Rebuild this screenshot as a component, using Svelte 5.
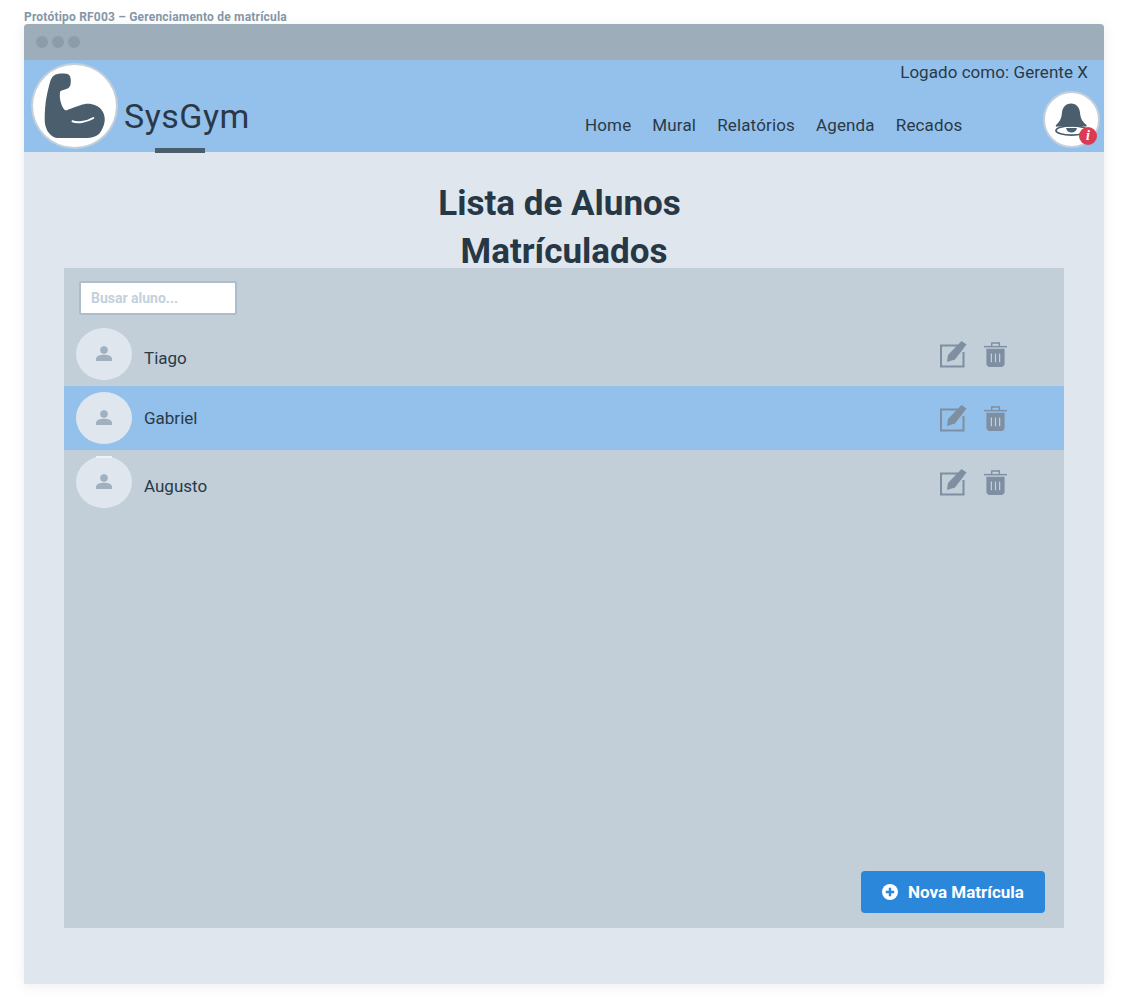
<script>
	const navItems = ['Home', 'Mural', 'Relatórios', 'Agenda', 'Recados'];
	const students = [
		{ name: 'Tiago', offset: 'low' },
		{ name: 'Gabriel', offset: '', selected: true },
		{ name: 'Augusto', offset: 'low', notch: true }
	];
</script>

<div class="page">
	<p class="caption">Protótipo RF003 – Gerenciamento de matrícula</p>

	<div class="window">
		<div class="titlebar">
			<span class="dot"></span>
			<span class="dot"></span>
			<span class="dot"></span>
		</div>

		<header class="header">
			<div class="logo">
				<svg width="83" height="82" viewBox="2 2 83 82" aria-hidden="true">
					<path
						fill="#4b5e6e"
						d="M23 12.500 C26 10 35 10 37.500 11.500 C40 13.500 40 17 39.700 20 C39.500 24 37.500 25.500 34 26.500 C31.500 27.500 29.500 27.500 29 29 C28.500 33 29 37 30 40 C31 44 33 47 35 47.500 C39 46 44 43.500 48 42.700 C53 41 56 40.500 60 41 C65 42 69.500 44.500 71.300 48 C73.500 51.500 74 55 73.700 58 C73 63 71 67.500 68 71 C65 73.500 60 75 56.300 75 L26.300 75 C22 74.500 18.500 71 16.300 67.700 C14.500 64 13.500 60 13.700 56 C13.700 50 14 45 14.700 39.300 C15.500 33 17 27 18.500 21 C19.500 17 20.500 14.500 23 12.500 Z"
					/>
					<path fill="none" stroke="#fff" stroke-width="2" stroke-linecap="round" d="M41.500 58.300 C46 60 55 59.500 62.300 55" />
				</svg>
			</div>

			<div class="brand">
				<span class="brand-name">SysGym</span>
				<span class="brand-mark"></span>
			</div>

			<div class="header-right">
				<p class="user">Logado como: Gerente X</p>
				<div class="header-row">
					<nav class="nav">
						{#each navItems as item}
							<a href="#top">{item}</a>
						{/each}
					</nav>
					<div class="bell">
						<svg width="53" height="53" viewBox="1.500 1.500 53 53" aria-hidden="true">
							<path
								fill="#4b5e6e"
								d="M27.500 12 C33 12 36 16 36.500 21 C37 26 38 29.500 42.500 33 C44 34.500 43 35.500 41 35 L14 35 C12.500 35.500 11.500 34.500 13 33 C17 29.500 18 26 18.500 21 C19 16 22 12 27.500 12 Z"
							/>
							<ellipse cx="28" cy="39" rx="15.500" ry="4.600" fill="none" stroke="#4b5e6e" stroke-width="1.800" />
							<path fill="#4b5e6e" d="M22.500 36.500 H33.500 C33 39.500 30.500 41 28 41 C25.500 41 23 39.500 22.500 36.500 Z" />
						</svg>
						<span class="badge">i</span>
					</div>
				</div>
			</div>
		</header>

		<main class="content">
			<h1 class="title"><span class="title-first">Lista de Alunos</span><span>Matrículados</span></h1>

			<section class="panel">
				<div class="search-wrap">
					<input class="search" type="text" placeholder="Busar aluno..." />
				</div>

				<ul class="list">
					{#each students as student}
						<li class="row" class:selected={student.selected}>
							<div class="avatar" class:notch={student.notch}>
								<svg width="18" height="18" viewBox="0 0 18 18" aria-hidden="true">
									<circle cx="9" cy="5" r="3.800" fill="#9fb0c0" />
									<path fill="#9fb0c0" d="M1 16 V14 C1 11 5 9.800 9 9.800 C13 9.800 17 11 17 14 V16 Z" />
								</svg>
							</div>
							<span class="name {student.offset}">{student.name}</span>
							<div class="actions">
								<svg width="28" height="28" viewBox="0 0 28 28" aria-hidden="true">
									<path fill="none" stroke="#7d8fa0" stroke-width="2" d="M19 5.500 H2 V26.500 H24.500 V12" />
									<path fill="#7d8fa0" d="M22.500 1 L27.500 4.500 L16 19.500 L8 22 L9 15 Z" />
								</svg>
								<svg width="23" height="25" viewBox="0 0 24 26" aria-hidden="true">
									<path fill="none" stroke="#7d8fa0" stroke-width="1.500" d="M8 4 V1 H16 V4" />
									<path fill="none" stroke="#7d8fa0" stroke-width="1.500" d="M0 4.800 H24" />
									<path fill="#7d8fa0" d="M2.500 7 H21.500 V22 C21.500 24.500 20 26 18 26 H6 C4 26 2.500 24.500 2.500 22 Z" />
									<path fill="none" stroke="#c3ced8" stroke-width="1.300" d="M7.700 12 V21 M12 12 V21 M16.300 12 V21" />
								</svg>
							</div>
						</li>
					{/each}
				</ul>

				<button class="add" type="button">
					<svg width="16" height="16" viewBox="0 0 16 16" aria-hidden="true">
						<circle cx="8" cy="8" r="8" fill="#fff" />
						<path stroke="#2b87da" stroke-width="2.400" d="M8 3.800 V12.200 M3.800 8 H12.200" />
					</svg>
					Nova Matrícula
				</button>
			</section>
		</main>
	</div>
</div>

<style>
	:global(body) {
		background: #fff;
		font-family: Roboto, "Liberation Sans", sans-serif;
	}

	.page {
		padding: 0 24px;
		height: 1008px;
		box-sizing: border-box;
		overflow: hidden;
	}

	.caption {
		margin: 0;
		height: 24px;
		padding-top: 10px;
		box-sizing: border-box;
		font-size: 12px;
		line-height: 15px;
		letter-spacing: 0.2px;
		font-weight: 700;
		color: #8496a7;
	}

	.window {
		width: 1080px;
		height: 960px;
		border-radius: 4px 4px 0 0;
		overflow: hidden;
		background: #dfe6ee;
		box-shadow: 0 2px 12px rgba(60, 80, 100, 0.1);
		display: flex;
		flex-direction: column;
	}

	.titlebar {
		height: 36px;
		flex: none;
		background: #9dadba;
		display: flex;
		align-items: center;
		gap: 4px;
		padding-left: 12px;
	}

	.dot {
		width: 12px;
		height: 12px;
		border-radius: 50%;
		background: #8b9cab;
	}

	.header {
		height: 92px;
		flex: none;
		background: #94c1ec;
		display: flex;
		position: relative;
		color: #2a3947;
	}

	.logo {
		width: 87px;
		height: 86px;
		box-sizing: border-box;
		margin: 3px 0 0 7px;
		border: 2px solid #c3cfda;
		border-radius: 50%;
		background: #fff;
		flex: none;
	}

	.logo svg,
	.bell svg {
		display: block;
	}

	.brand {
		margin-left: 6px;
		position: relative;
		width: 130px;
		flex: none;
	}

	.brand-name {
		display: block;
		margin-top: 35px;
		font-size: 34px;
		line-height: 42px;
		letter-spacing: 0.5px;
		font-weight: 400;
		color: #2a3947;
	}

	.brand-mark {
		position: absolute;
		left: 31px;
		top: 88px;
		width: 50px;
		height: 5px;
		background: #4b5e6e;
	}

	.header-right {
		flex: 1;
		display: flex;
		flex-direction: column;
		padding-right: 4px;
	}

	.user {
		margin: 0;
		padding: 2px 12px 0 0;
		text-align: right;
		font-size: 17px;
		line-height: 20px;
		letter-spacing: 0.05px;
	}

	.header-row {
		display: flex;
		justify-content: space-between;
		align-items: flex-start;
		padding-left: 331px;
		margin-top: 9px;
	}

	.nav {
		display: flex;
		gap: 21px;
		margin-top: 24px;
	}

	.nav a {
		color: #2a3947;
		text-decoration: none;
		font-size: 17px;
		line-height: 20px;
		letter-spacing: 0.15px;
	}

	.bell {
		width: 57px;
		height: 57px;
		box-sizing: border-box;
		border: 2px solid #c3cfda;
		border-radius: 50%;
		background: #fff;
		position: relative;
		flex: none;
	}

	.badge {
		position: absolute;
		left: 34px;
		top: 34px;
		width: 18px;
		height: 18px;
		border-radius: 50%;
		background: #dc3a52;
		color: #fff;
		font: italic 700 14px/18px "Liberation Serif", serif;
		text-align: center;
	}

	.content {
		flex: 1;
		padding: 28px 40px 56px;
		display: flex;
		flex-direction: column;
		min-height: 0;
	}

	.title {
		margin: 0;
		font-size: 35px;
		line-height: 48px;
		font-weight: 700;
		text-align: center;
		color: #263745;
		height: 88px;
	}

	.title span {
		display: block;
	}

	.title-first {
		padding-right: 9px;
	}

	.panel {
		flex: 1;
		background: #c2ced8;
		position: relative;
	}

	.search-wrap {
		padding: 13px 0 7px 15px;
		height: 54px;
		box-sizing: border-box;
	}

	.search {
		width: 158px;
		height: 34px;
		box-sizing: border-box;
		border: 2px solid #aebdcb;
		border-radius: 2px;
		background: #fff;
		padding: 0 10px;
		font-family: inherit;
		font-size: 14px;
		font-weight: 700;
		outline: none;
		display: block;
	}

	.search::placeholder {
		color: #c3d0dc;
		opacity: 1;
	}

	.list {
		list-style: none;
		margin: 0;
		padding: 0;
	}

	.row {
		height: 64px;
		display: flex;
		align-items: center;
		padding-left: 12px;
		color: #2a3947;
	}

	.row.selected {
		background: #94c1ec;
	}

	.avatar {
		width: 56px;
		height: 52px;
		border-radius: 50%;
		background: #dfe6ee;
		display: flex;
		align-items: center;
		justify-content: center;
		flex: none;
		position: relative;
	}

	.avatar.notch::before {
		content: '';
		position: absolute;
		left: 20px;
		top: 0;
		width: 16px;
		height: 2px;
		background: #eef2f6;
	}

	.name {
		margin-left: 12px;
		font-size: 17px;
		line-height: 20px;
		flex: 1;
	}

	.name.low {
		padding-top: 8px;
	}

	.actions {
		display: flex;
		align-items: center;
		gap: 17px;
		margin-right: 57px;
	}

	.add {
		position: absolute;
		right: 19px;
		bottom: 15px;
		width: 184px;
		height: 42px;
		border: none;
		border-radius: 4px;
		background: #2b87da;
		color: #fff;
		font-family: inherit;
		font-size: 17px;
		font-weight: 700;
		display: flex;
		align-items: center;
		justify-content: center;
		gap: 10px;
	}
</style>
